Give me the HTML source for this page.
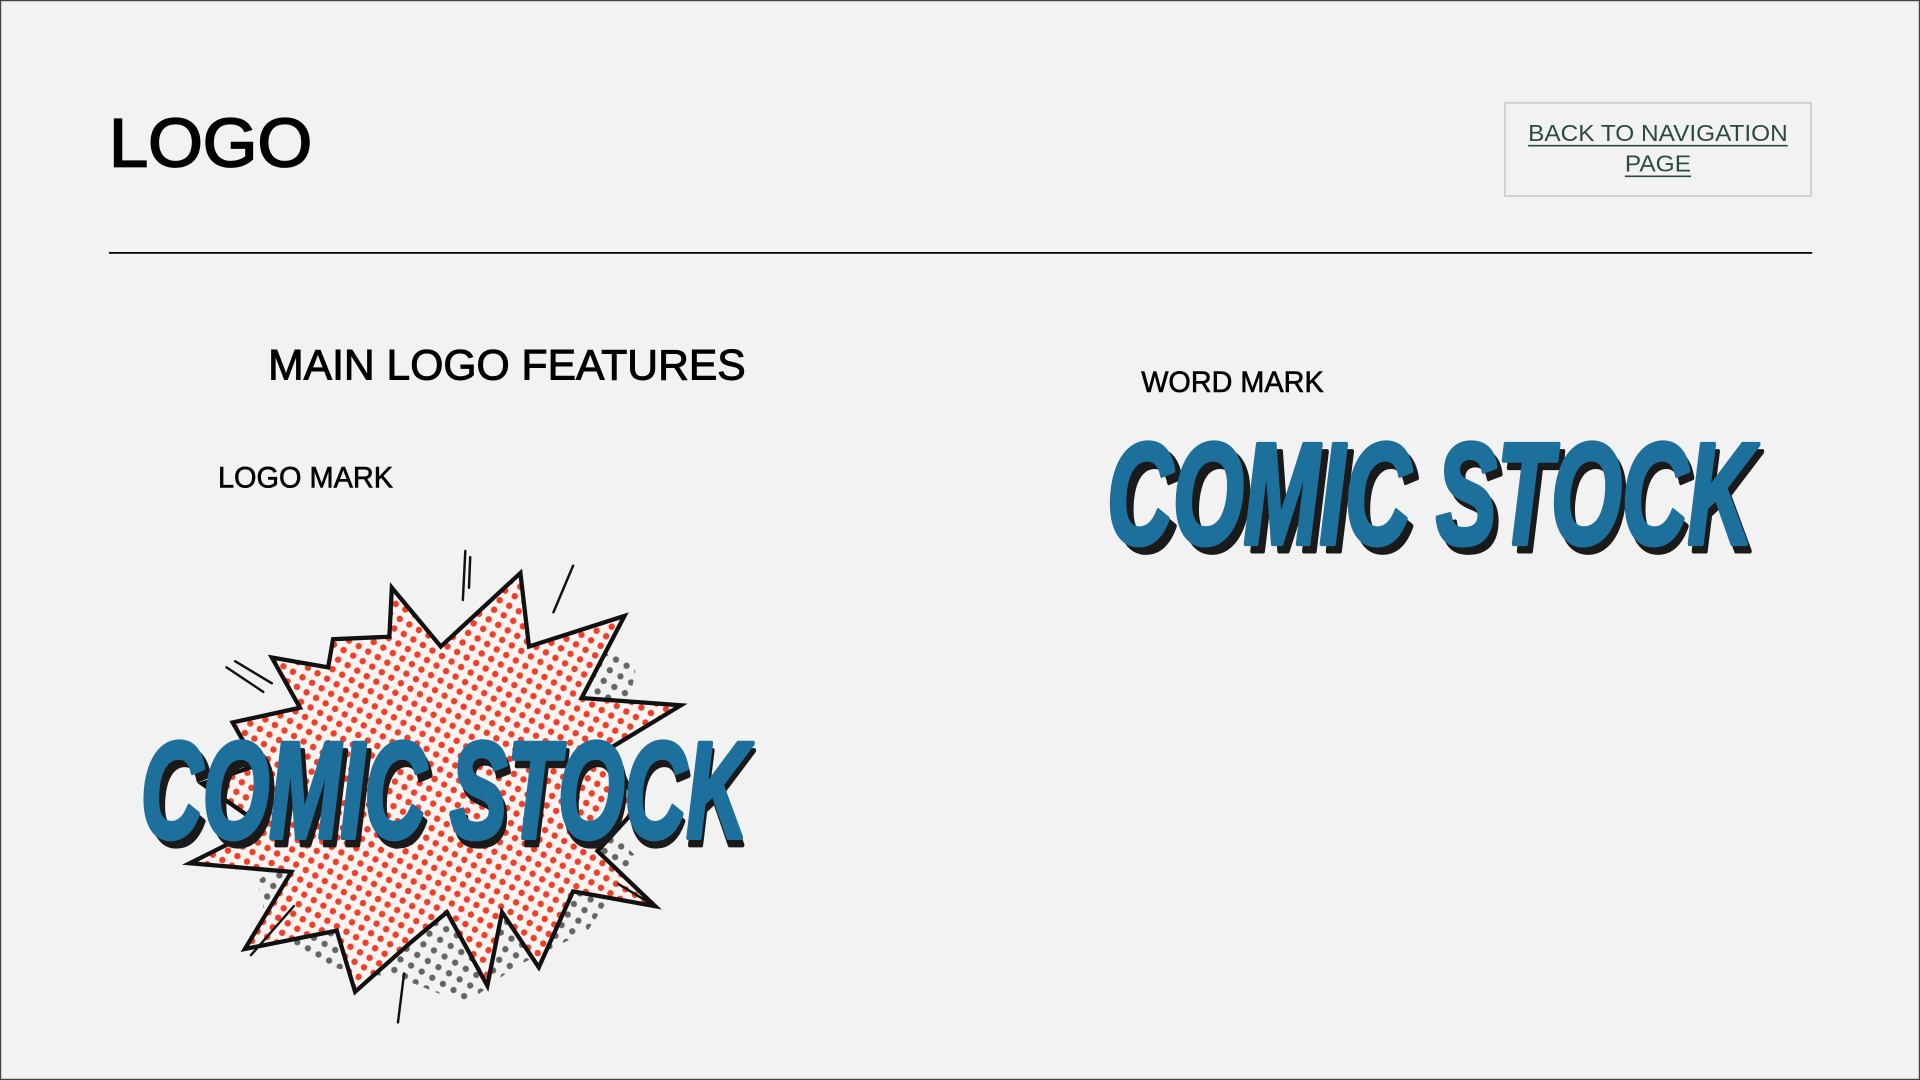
<!DOCTYPE html>
<html><head><meta charset="utf-8"><style>
html,body{margin:0;padding:0;background:#f2f2f2;width:1920px;height:1080px;overflow:hidden}
svg{display:block}
</style></head><body>
<svg width="1920" height="1080" viewBox="0 0 1568 882" xmlns="http://www.w3.org/2000/svg">
<defs>
<pattern id="dots" width="9" height="9" patternUnits="userSpaceOnUse" patternTransform="rotate(30)">
<rect width="9" height="9" fill="#fdf3f0"/>
<circle cx="4.5" cy="4.5" r="2.6" fill="#ee3f2b"/>
</pattern>
<pattern id="gdots" width="10" height="10" patternUnits="userSpaceOnUse" patternTransform="rotate(30)">
<circle cx="5" cy="5" r="2.6" fill="#555"/>
</pattern>
</defs>
<rect x="0.5" y="0.5" width="1567" height="881" fill="#f2f2f2" stroke="#444" stroke-width="1"/>
<g font-family="Liberation Sans, sans-serif" fill="#000" stroke="#000">
<text x="89" y="136" font-size="56" stroke-width="1.5" textLength="166" lengthAdjust="spacingAndGlyphs">LOGO</text>
<text x="219" y="310" font-size="35" stroke-width="0.8" textLength="390" lengthAdjust="spacingAndGlyphs">MAIN LOGO FEATURES</text>
<text x="932" y="320" font-size="24" stroke-width="0.5" textLength="149" lengthAdjust="spacingAndGlyphs">WORD MARK</text>
<text x="178" y="398" font-size="24" stroke-width="0.5" textLength="143" lengthAdjust="spacingAndGlyphs">LOGO MARK</text>
</g>
<rect x="1229" y="84" width="250" height="76" fill="none" stroke="#cfcfcf" stroke-width="1.5"/>
<g font-family="Liberation Sans, sans-serif" fill="#2d4a3e" font-size="19">
<text x="1248" y="115" textLength="212" lengthAdjust="spacingAndGlyphs">BACK TO NAVIGATION</text>
<text x="1327" y="140" textLength="54" lengthAdjust="spacingAndGlyphs">PAGE</text>
</g>
<line x1="1248" y1="119" x2="1460" y2="119" stroke="#2d4a3e" stroke-width="1.3"/>
<line x1="1327" y1="144" x2="1381" y2="144" stroke="#2d4a3e" stroke-width="1.3"/>
<line x1="89" y1="206.5" x2="1480" y2="206.5" stroke="#000" stroke-width="1.5"/>

<!-- word mark -->
<g font-family="Liberation Sans, sans-serif" font-weight="bold" font-style="italic" font-size="118" stroke-linejoin="round">
<text x="910" y="450" fill="#1a1a1a" stroke="#1a1a1a" stroke-width="4" textLength="525" lengthAdjust="spacingAndGlyphs">COMIC STOCK</text>
<text x="904" y="444" fill="#1d6f9c" stroke="#1d6f9c" stroke-width="4" textLength="528" lengthAdjust="spacingAndGlyphs">COMIC STOCK</text>
</g>

<!-- burst -->
<path d="M440 520 L520 540 L510 600 L470 650 L520 700 L480 760 L420 790 L380 820 L330 800 L270 790 L220 760 L210 720 Z" fill="url(#gdots)" opacity="0.9"/>
<polygon points="320,480 360,528 425,468 432,528 510,503 475,570 556,576 500,610 520,660 488,695 535,740 468,728 440,790 410,745 398,805 365,745 335,770 290,810 275,760 200,775 238,712 155,705 215,675 165,640 210,625 190,590 245,578 222,537 268,545 272,522 318,520" fill="url(#dots)" stroke="#111" stroke-width="3.5" stroke-linejoin="miter"/>
<g stroke="#111" stroke-width="2" stroke-linecap="round">
<line x1="380" y1="450" x2="378" y2="490"/><line x1="384" y1="455" x2="383" y2="480"/>
<line x1="468" y1="462" x2="452" y2="500"/>
<line x1="185" y1="545" x2="215" y2="565"/><line x1="192" y1="540" x2="222" y2="558"/>
<line x1="240" y1="740" x2="205" y2="780"/>
<line x1="505" y1="722" x2="535" y2="740"/>
<line x1="330" y1="795" x2="325" y2="835"/>
</g>
<g font-family="Liberation Sans, sans-serif" font-weight="bold" font-style="italic" font-size="112" stroke-linejoin="round">
<text x="120" y="690" fill="#1a1a1a" stroke="#1a1a1a" stroke-width="4" textLength="492" lengthAdjust="spacingAndGlyphs">COMIC STOCK</text>
<text x="115" y="684" fill="#1d6f9c" stroke="#1d6f9c" stroke-width="4" textLength="496" lengthAdjust="spacingAndGlyphs">COMIC STOCK</text>
</g>
</svg>
</body></html>
